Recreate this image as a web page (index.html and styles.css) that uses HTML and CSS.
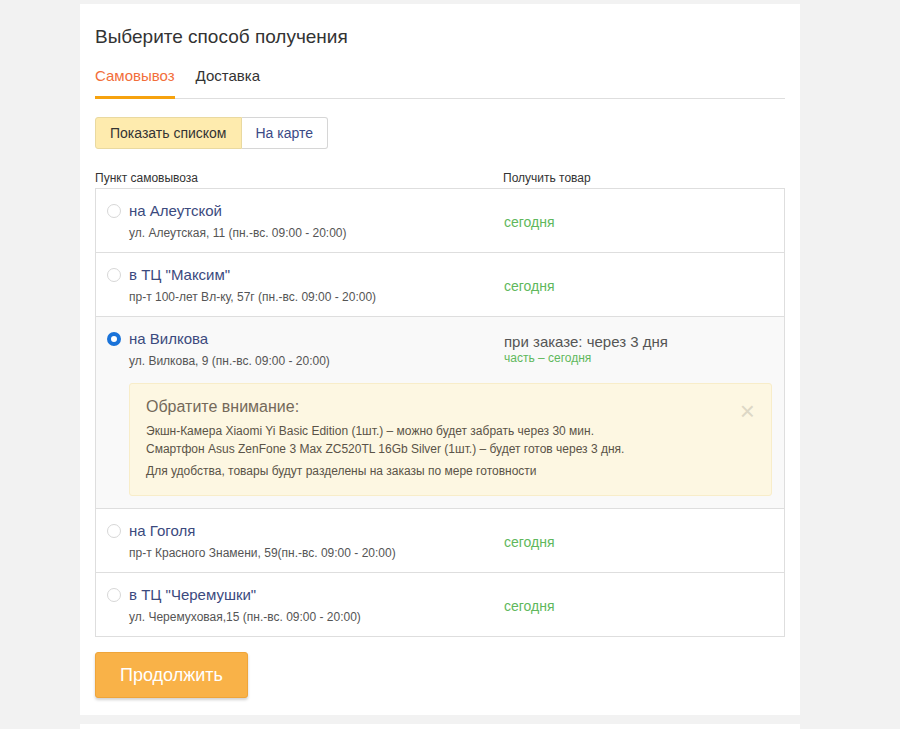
FILE: index.html
```html
<!DOCTYPE html>
<html lang="ru">
<head>
<meta charset="utf-8">
<title>Выберите способ получения</title>
<link rel="stylesheet" href="styles.css">
</head>
<body>
<div class="page">
  <section class="card">
    <h1 class="title">Выберите способ получения</h1>
    <div class="tabs">
      <span class="tab tab-active">Самовывоз</span>
      <span class="tab">Доставка</span>
    </div>
    <div class="toggle">
      <span class="toggle-btn toggle-active">Показать списком</span>
      <span class="toggle-btn">На карте</span>
    </div>
    <div class="heads">
      <span class="head-left">Пункт самовывоза</span>
      <span>Получить товар</span>
    </div>
    <div class="table">
      <div class="row">
        <div class="row-main">
          <div class="point">
            <span class="radio"></span>
            <div>
              <div class="point-name">на Алеутской</div>
              <div class="point-addr">ул. Алеутская, 11 (пн.-вс. 09:00 - 20:00)</div>
            </div>
          </div>
          <div class="when"><span class="green">сегодня</span></div>
        </div>
      </div>
      <div class="row">
        <div class="row-main">
          <div class="point">
            <span class="radio"></span>
            <div>
              <div class="point-name">в ТЦ "Максим"</div>
              <div class="point-addr">пр-т 100-лет Вл-ку, 57г (пн.-вс. 09:00 - 20:00)</div>
            </div>
          </div>
          <div class="when"><span class="green">сегодня</span></div>
        </div>
      </div>
      <div class="row row-selected">
        <div class="row-main">
          <div class="point">
            <span class="radio radio-on"></span>
            <div>
              <div class="point-name">на Вилкова</div>
              <div class="point-addr">ул. Вилкова, 9 (пн.-вс. 09:00 - 20:00)</div>
            </div>
          </div>
          <div class="when when-top">
            <div class="when-main">при заказе: через 3 дня</div>
            <div class="when-sub">часть – сегодня</div>
          </div>
        </div>
        <div class="notice">
          <span class="notice-close">×</span>
          <div class="notice-title">Обратите внимание:</div>
          <div class="notice-line">Экшн-Камера Xiaomi Yi Basic Edition (1шт.) – можно будет забрать через 30 мин.</div>
          <div class="notice-line">Смартфон Asus ZenFone 3 Max ZC520TL 16Gb Silver (1шт.) – будет готов через 3 дня.</div>
          <div class="notice-line notice-last">Для удобства, товары будут разделены на заказы по мере готовности</div>
        </div>
      </div>
      <div class="row">
        <div class="row-main">
          <div class="point">
            <span class="radio"></span>
            <div>
              <div class="point-name">на Гоголя</div>
              <div class="point-addr">пр-т Красного Знамени, 59(пн.-вс. 09:00 - 20:00)</div>
            </div>
          </div>
          <div class="when"><span class="green">сегодня</span></div>
        </div>
      </div>
      <div class="row">
        <div class="row-main">
          <div class="point">
            <span class="radio"></span>
            <div>
              <div class="point-name">в ТЦ "Черемушки"</div>
              <div class="point-addr">ул. Черемуховая,15 (пн.-вс. 09:00 - 20:00)</div>
            </div>
          </div>
          <div class="when"><span class="green">сегодня</span></div>
        </div>
      </div>
    </div>
    <button class="continue">Продолжить</button>
  </section>
  <section class="card card-next"></section>
</div>
</body>
</html>
```
FILE: styles.css
```css
* { box-sizing: border-box; }
html, body {
  margin: 0;
  padding: 0;
  background: #f2f2f2;
  font-family: "Liberation Sans", Arial, sans-serif;
  color: #333;
}
.page {
  padding: 4px 100px 0 80px;
}
.card {
  background: #fff;
  width: 720px;
  padding: 21px 15px 17px;
}
.card-next {
  margin-top: 9px;
  height: 40px;
}
.title {
  margin: 0 0 17px;
  font-size: 19px;
  line-height: 24px;
  font-weight: normal;
  color: #333;
}
.tabs {
  display: flex;
  gap: 21px;
  border-bottom: 1px solid #dedede;
}
.tab {
  font-size: 15px;
  line-height: 20px;
  padding-bottom: 10px;
  margin-bottom: -1px;
  border-bottom: 3px solid transparent;
  color: #333;
}
.tab-active {
  color: #f26e3a;
  border-bottom-color: #f6a20e;
}
.toggle {
  display: flex;
  margin-top: 18px;
}
.toggle-btn {
  font-size: 14px;
  line-height: 30px;
  height: 32px;
  padding: 0 14px;
  border: 1px solid #d6d6d6;
  color: #3b4a86;
  background: #fff;
}
.toggle-btn:first-child {
  border-radius: 3px 0 0 3px;
}
.toggle-btn:last-child {
  border-radius: 0 3px 3px 0;
  border-left: none;
}
.toggle-active {
  background: #feebae;
  color: #333;
  border-color: #e9d9a0;
}
.heads {
  display: flex;
  margin-top: 21px;
  margin-bottom: 2px;
  font-size: 12px;
  line-height: 16px;
  color: #333;
}
.head-left {
  width: 408px;
}
.table {
  border: 1px solid #dedede;
}
.row {
  border-top: 1px solid #dedede;
  padding: 12px 12px 10px 11px;
}
.row:first-child {
  border-top: none;
}
.row-selected {
  background: #f9f9f9;
  padding-bottom: 12px;
}
.row-main {
  display: flex;
}
.point {
  width: 397px;
  display: flex;
  align-items: flex-start;
}
.radio {
  flex: none;
  width: 14px;
  height: 14px;
  margin: 3px 8px 0 0;
  border-radius: 50%;
  border: 1px solid #d7d7d7;
  background: #fff;
}
.radio-on {
  border: 4px solid #1a73d9;
}
.point-name {
  font-size: 15px;
  line-height: 20px;
  color: #3b4a7e;
}
.point-addr {
  margin-top: 3px;
  font-size: 12px;
  line-height: 18px;
  color: #555;
}
.when {
  display: flex;
  align-items: center;
  padding-top: 1px;
}
.when-top {
  display: block;
  padding-top: 4px;
}
.green {
  color: #5fb85c;
  font-size: 14px;
}
.when-main {
  font-size: 15px;
  line-height: 18px;
  color: #555;
}
.when-sub {
  font-size: 12px;
  line-height: 15px;
  color: #5fb85c;
}
.notice {
  position: relative;
  margin: 13px 0 0 22px;
  background: #fdf7e2;
  border: 1px solid #f8edc9;
  border-radius: 3px;
  padding: 12px 16px 15px;
  color: #5a5347;
}
.notice-title {
  font-size: 16px;
  line-height: 22px;
  color: #74695a;
  margin-bottom: 4px;
}
.notice-line {
  font-size: 12px;
  line-height: 18px;
}
.notice-last {
  margin-top: 4px;
}
.notice-close {
  position: absolute;
  right: 16px;
  top: 14px;
  font-size: 26px;
  line-height: 26px;
  color: #ddd8c6;
}
.continue {
  display: block;
  margin-top: 15px;
  height: 46px;
  padding: 0 24px;
  font-family: "Liberation Sans", Arial, sans-serif;
  font-size: 18px;
  color: #fff;
  background: #f9b248;
  border: 1px solid #efa53a;
  border-radius: 3px;
  box-shadow: 0 2px 3px rgba(0, 0, 0, 0.18);
}
```
